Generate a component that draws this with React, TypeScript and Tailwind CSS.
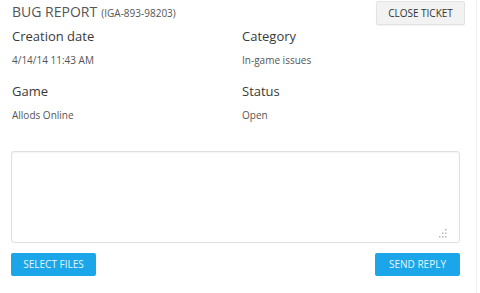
import React from "react";

const font = { fontFamily: '"Open Sans", "Liberation Sans", sans-serif' };

function Field({ label, value }: { label: string; value: string }) {
  return (
    <div className="flex flex-col">
      <div className="text-[13px] leading-[16px] text-[#3a3a3a]">{label}</div>
      <div className="mt-[9px] text-[10px] leading-[14px] text-[#555]">{value}</div>
    </div>
  );
}

function Grip() {
  return (
    <svg width="9" height="9" viewBox="0 0 9 9" className="absolute right-[13px] bottom-[5px]">
      <g fill="#b5b5b5">
        <rect x="7" y="0" width="1.5" height="1.5" />
        <rect x="4" y="3.5" width="1.5" height="1.5" />
        <rect x="7" y="3.5" width="1.5" height="1.5" />
        <rect x="1" y="7" width="1.5" height="1.5" />
        <rect x="4" y="7" width="1.5" height="1.5" />
        <rect x="7" y="7" width="1.5" height="1.5" />
      </g>
    </svg>
  );
}

export default function App() {
  return (
    <div className="w-[480px] h-[293px] bg-white overflow-hidden" style={font}>
      <div className="w-[477px] h-full border-r border-[#efefef] flex flex-col">
        <div className="flex justify-between items-start h-[25px] pl-[12px] pr-[11px]">
          <div className="pt-[2px] leading-[18px] text-[#555]">
            <span className="text-[14px]">BUG REPORT</span>{" "}
            <span className="text-[10px]">(IGA-893-98203)</span>
          </div>
          <button className="mt-px h-[24px] w-[89px] bg-[#f2f2f2] border border-[#e3e3e3] rounded-[2px] shadow-[0_1px_1px_rgba(0,0,0,0.06)] text-[10px] text-[#333]">
            CLOSE TICKET
          </button>
        </div>

        <div className="grid grid-cols-[230px_1fr] pl-[12px] mt-[3px] gap-y-[16px]">
          <Field label="Creation date" value="4/14/14 11:43 AM" />
          <Field label="Category" value="In-game issues" />
          <Field label="Game" value="Allods Online" />
          <Field label="Status" value="Open" />
        </div>

        <div className="relative ml-[11px] mt-[29px] w-[449px] h-[92px]">
          <textarea className="w-full h-full resize-none border border-[#e0e0e0] rounded-[3px] shadow-[inset_0_1px_2px_rgba(0,0,0,0.05)] outline-none" />
          <Grip />
        </div>

        <div className="flex justify-between ml-[11px] mt-[10px] w-[449px]">
          <button className="h-[23px] w-[85px] bg-[#1aa6e8] rounded-[2px] text-[10px] text-[#e6f6ff]">
            SELECT FILES
          </button>
          <button className="h-[23px] w-[85px] bg-[#1aa6e8] rounded-[2px] text-[10px] text-[#e6f6ff]">
            SEND REPLY
          </button>
        </div>
      </div>
    </div>
  );
}
